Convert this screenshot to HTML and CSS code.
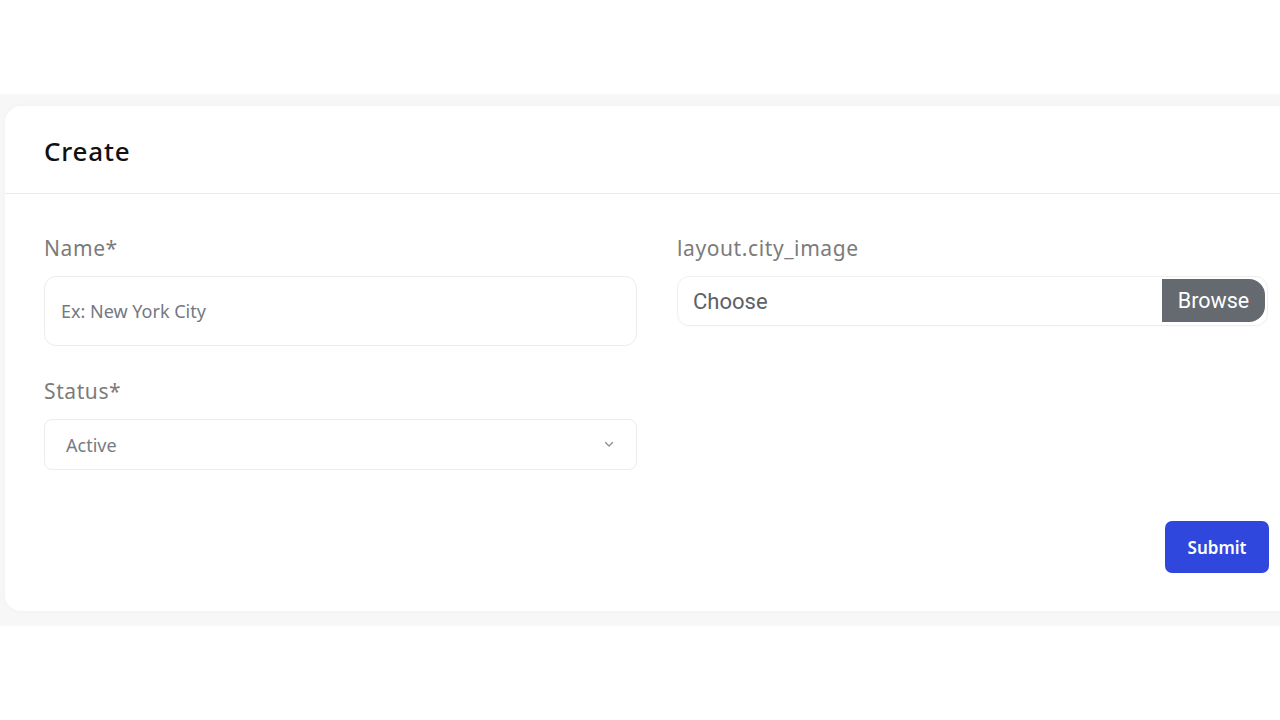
FILE: index.html
```html
<!DOCTYPE html>
<html lang="en">
<head>
<meta charset="utf-8">
<title>Create</title>
<link rel="stylesheet" href="styles.css">
</head>
<body>
<div class="page">
  <div class="band">
    <div class="card">
      <div class="card-header">
        <h1 class="title">Create</h1>
      </div>
      <form class="card-body">
        <div class="grid">
          <div class="col">
            <div class="field">
              <label class="label">Name*</label>
              <input class="input input-lg" type="text" placeholder="Ex: New York City">
            </div>
            <div class="field">
              <label class="label">Status*</label>
              <div class="select">
                <span class="select-text">Active</span>
                <svg class="chev" width="10" height="7" viewBox="0 0 10 7"><path d="M1.5 1.5 L5 5 L8.5 1.5" fill="none" stroke="#8a8f99" stroke-width="1.3" stroke-linecap="round" stroke-linejoin="round"/></svg>
              </div>
            </div>
          </div>
          <div class="col">
            <div class="field">
              <label class="label">layout.city_image</label>
              <div class="file">
                <span class="file-text">Choose</span>
                <span class="browse">Browse</span>
              </div>
            </div>
          </div>
        </div>
        <div class="actions">
          <button class="submit" type="button">Submit</button>
        </div>
      </form>
    </div>
  </div>
</div>
</body>
</html>
```

FILE: styles.css
```css
html, body {
  margin: 0;
  padding: 0;
  background: #ffffff;
  overflow: hidden;
  width: 1280px;
  height: 720px;
}
.page {
  padding-top: 94px;
}
.band {
  background: #f7f7f8;
  padding: 12px 0 15px 5px;
  width: 1400px;
}
.card {
  width: 1304px;
  background: #ffffff;
  border-radius: 16px;
  box-shadow: 0 0 6px rgba(0,0,0,0.03);
}
.card-header {
  height: 88px;
  border-bottom: 1px solid #ebebeb;
  display: flex;
  align-items: center;
  padding: 0 39px;
  box-sizing: border-box;
}
.title {
  margin: 0;
  font-family: "Noto Sans", sans-serif;
  font-weight: 500;
  font-size: 26px;
  color: #111111;
  letter-spacing: 0.8px;
  padding-top: 2px;
}
.card-body {
  padding: 40px 39px 38px 39px;
  margin: 0;
}
.grid {
  display: grid;
  grid-template-columns: 593px 591px;
  column-gap: 40px;
}
.field {
  display: flex;
  flex-direction: column;
  margin-bottom: 31px;
}
.col .field:last-child {
  margin-bottom: 30px;
}
.label {
  font-family: "Noto Sans", sans-serif;
  font-size: 21px;
  line-height: 28px;
  color: #7b7b7b;
  letter-spacing: 0.6px;
  margin-bottom: 14px;
}
.input {
  box-sizing: border-box;
  border: 1px solid #ececec;
  border-radius: 12px;
  background: #fff;
  font-family: "Noto Sans", sans-serif;
  outline: none;
}
.input-lg {
  height: 70px;
  padding: 0 16px;
  font-size: 18px;
}
.input-lg::placeholder {
  color: #737882;
}
.select {
  box-sizing: border-box;
  height: 51px;
  border: 1px solid #ececec;
  border-radius: 8px;
  display: flex;
  align-items: center;
  justify-content: space-between;
  padding: 0 22px 0 21px;
}
.select-text {
  font-family: "Noto Sans", sans-serif;
  font-size: 18px;
  color: #777b84;
}
.file {
  box-sizing: border-box;
  height: 50px;
  border: 1px solid #efefef;
  border-radius: 12px;
  display: flex;
  align-items: center;
  justify-content: space-between;
  padding: 1px 1px 1px 15px;
  box-shadow: 0 1px 2px rgba(0,0,0,0.02);
}
.file-text {
  font-family: "Roboto", "Noto Sans", sans-serif;
  font-size: 22px;
  color: #5d6168;
}
.browse {
  height: 43px;
  width: 103px;
  margin-top: -2px;
  margin-right: 1px;
  background: #656a70;
  color: #ffffff;
  border-radius: 0 16px 16px 0;
  display: flex;
  align-items: center;
  justify-content: center;
  font-family: "Roboto", "Noto Sans", sans-serif;
  font-size: 21.5px;
}
.actions {
  display: flex;
  justify-content: flex-end;
  padding-right: 1px;
  margin-top: 21px;
}
.submit {
  width: 104px;
  height: 52px;
  border: none;
  border-radius: 7px;
  background: #2f47dd;
  color: #ffffff;
  font-family: "Noto Sans", sans-serif;
  font-weight: 600;
  font-size: 17px;
  cursor: pointer;
}
.chev {
  display: block;
}
```
